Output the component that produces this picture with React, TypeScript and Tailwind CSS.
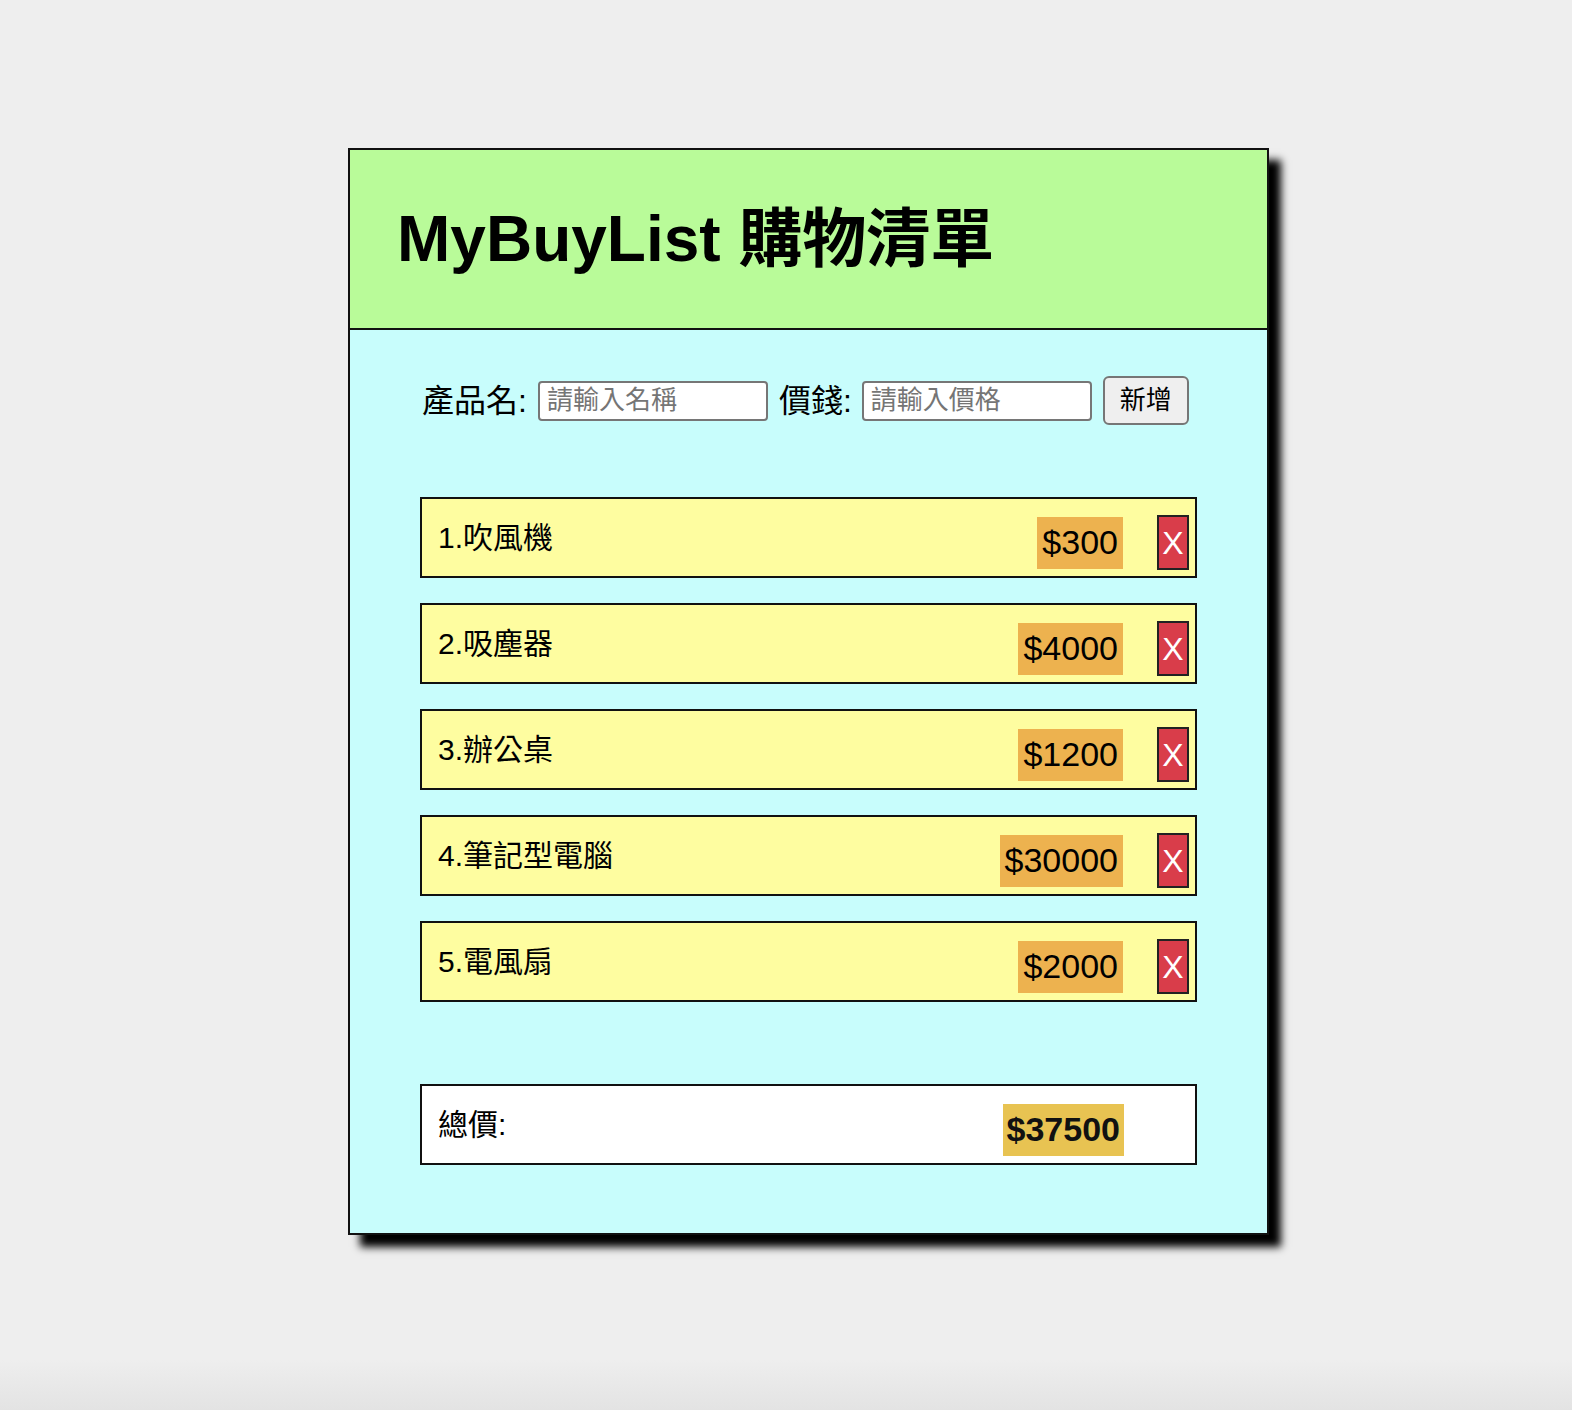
import { useState } from "react";

interface Item {
  name: string;
  price: number;
}

const initialItems: Item[] = [
  { name: "吹風機", price: 300 },
  { name: "吸塵器", price: 4000 },
  { name: "辦公桌", price: 1200 },
  { name: "筆記型電腦", price: 30000 },
  { name: "電風扇", price: 2000 },
];

export default function App() {
  const [items, setItems] = useState<Item[]>(initialItems);
  const [name, setName] = useState("");
  const [price, setPrice] = useState("");

  const total = items.reduce((sum, i) => sum + i.price, 0);

  const addItem = () => {
    if (!name || !price) return;
    setItems([...items, { name, price: Number(price) }]);
    setName("");
    setPrice("");
  };

  return (
    <div
      className="min-h-[1410px] bg-[linear-gradient(to_bottom,#eeeeee_0,#eeeeee_1360px,#e3e3e3_1410px)] pt-[148px] pl-[348px]"
      style={{ fontFamily: '"Liberation Sans", "Noto Sans CJK TC", sans-serif' }}
    >
      <div className="w-[921px] border-2 border-[#111] bg-[#c8fdfc] shadow-[12px_12px_8px_#000]">
        <div className="h-[180px] flex items-center pl-[47px] bg-[#b9fb99] border-b-2 border-[#111]">
          <h1 className="text-[64px] font-bold text-black leading-none">MyBuyList 購物清單</h1>
        </div>

        <div className="pt-[46px] pb-[68px] px-[70px]">
          <div className="flex items-center pl-[2px] text-[32px] text-black">
            <label className="mr-[11px]">產品名:</label>
            <input
              value={name}
              onChange={(e) => setName(e.target.value)}
              placeholder="請輸入名稱"
              className="w-[230px] h-[40px] px-[7px] text-[26px] bg-white border-2 border-[#767676] rounded-[4px] placeholder:text-[#757575] outline-none"
            />
            <label className="ml-[11px] mr-[10px]">價錢:</label>
            <input
              value={price}
              onChange={(e) => setPrice(e.target.value)}
              placeholder="請輸入價格"
              className="w-[230px] h-[40px] px-[7px] text-[26px] bg-white border-2 border-[#767676] rounded-[4px] placeholder:text-[#757575] outline-none"
            />
            <button
              type="button"
              onClick={addItem}
              className="ml-[11px] w-[86px] h-[49px] text-[26px] bg-[#efefef] border-2 border-[#767676] rounded-[6px]"
            >
              新增
            </button>
          </div>

          <div className="mt-[72px] flex flex-col gap-[25px]">
            {items.map((item, idx) => (
              <div
                key={idx}
                className="h-[81px] flex items-center pt-[10px] pl-4 pr-[6px] bg-[#fefda0] border-2 border-[#111]"
              >
                <span className="flex-1 text-[30px] text-black mb-[10px]">
                  {idx + 1}.{item.name}
                </span>
                <span className="h-[52px] flex items-center px-[5px] bg-[#edb24f] text-[34px] text-black">
                  ${item.price}
                </span>
                <button
                  type="button"
                  onClick={() => setItems(items.filter((_, i) => i !== idx))}
                  className="ml-[34px] w-[32px] h-[55px] flex items-center justify-center bg-[#d93d4a] border-2 border-[#222] text-white text-[32px] leading-none"
                >
                  X
                </button>
              </div>
            ))}
          </div>

          <div className="mt-[82px] h-[81px] flex items-center pt-[10px] pl-4 pr-[71px] bg-white border-2 border-[#111]">
            <span className="flex-1 text-[30px] text-black mb-[10px]">總價:</span>
            <span className="h-[52px] flex items-center px-[4px] bg-[#e8c352] text-[34px] font-bold text-[#111]">
              ${total}
            </span>
          </div>
        </div>
      </div>
    </div>
  );
}
